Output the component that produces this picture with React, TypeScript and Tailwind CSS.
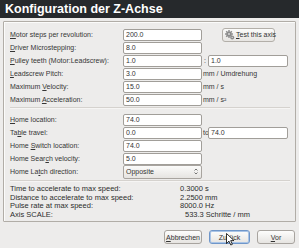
import React from "react";

const U = ({ children }: { children: React.ReactNode }) => (
  <span className="underline decoration-[0.6px] underline-offset-[1px]">{children}</span>
);

function Field({ value, wide }: { value: string; wide?: boolean }) {
  return (
    <div
      className={
        wide
          ? "flex h-[12px] w-[80px] shrink-0 items-center rounded-[2px] border border-[#a19e99] bg-white pl-[2px] text-[7px] text-[#333]"
          : "flex h-[12px] w-[79px] shrink-0 items-center rounded-[2px] border border-[#a19e99] bg-white pl-[2px] text-[7px] text-[#333]"
      }
    >
      {value}
    </div>
  );
}

function Row({ label, children }: { label: React.ReactNode; children?: React.ReactNode }) {
  return (
    <div className="flex h-[13px] items-center">
      <div className="w-[113px] shrink-0 whitespace-nowrap">{label}</div>
      {children}
    </div>
  );
}

function Gear() {
  return (
    <svg width="10" height="10" viewBox="0 0 10 10" className="shrink-0">
      <g fill="#8c8c8c">
        <circle cx="4" cy="4" r="2.6" />
        <rect x="3.3" y="0" width="1.4" height="8" />
        <rect x="0" y="3.3" width="8" height="1.4" />
        <rect x="3.3" y="0" width="1.4" height="8" transform="rotate(45 4 4)" />
        <rect x="3.3" y="0" width="1.4" height="8" transform="rotate(-45 4 4)" />
        <circle cx="7.2" cy="7.4" r="2" />
      </g>
      <circle cx="4" cy="4" r="1" fill="#d8d8d8" />
      <circle cx="7.2" cy="7.4" r="0.7" fill="#d8d8d8" />
    </svg>
  );
}

function Sep() {
  return <div className="mr-[5px] h-[2px] border-t border-[#d3d0cb] bg-[#f7f6f5] opacity-90" />;
}

function Btn({ children, focus, w }: { children: React.ReactNode; focus?: boolean; w: string }) {
  return (
    <div
      className={
        (focus
          ? "border-[#6f96c9] shadow-[inset_0_0_0_1px_#a9c4e6] "
          : "border-[#a8a49f] ") +
        w +
        " flex h-[14px] items-center justify-center rounded-[3px] border bg-gradient-to-b from-[#fdfdfc] to-[#e6e4e1] text-[7px] text-[#333]"
      }
    >
      {children}
    </div>
  );
}

export default function App() {
  return (
    <div className="relative flex h-[248px] w-[299px] flex-col overflow-hidden bg-[#edeceb] font-['Liberation_Sans',Arial,sans-serif] text-[7px] leading-none text-[#363636]">
      <div className="flex h-[18px] shrink-0 items-center bg-[#26292c] pl-[5px] text-[12.5px] font-bold text-white">
        Konfiguration der Z-Achse
      </div>

      <div className="ml-[3px] mr-[3px] mt-[3px] h-[201px] shrink-0 rounded-[1px] border border-[#b1ada7] pl-[6px] pt-[6px] shadow-[inset_1px_1px_0_#fbfbfa]">
        <Row label={<><U>M</U>otor steps per revolution:</>}>
          <Field value="200.0" />
          <div className="ml-[20px] flex h-[14px] w-[53px] shrink-0 items-center gap-[1px] rounded-[3px] border border-[#b3afa9] bg-gradient-to-b from-[#fbfbfa] to-[#e7e5e2] pl-[2px] text-[7px] text-[#333]">
            <Gear />
            <span className="whitespace-nowrap">
              <U>T</U>est this axis
            </span>
          </div>
        </Row>
        <Row label={<><U>D</U>river Microstepping:</>}>
          <Field value="8.0" />
        </Row>
        <Row label={<><U>P</U>ulley teeth (Motor:Leadscrew):</>}>
          <Field value="1.0" />
          <div className="w-[6px] shrink-0 pl-[2px]">:</div>
          <Field value="1.0" wide />
        </Row>
        <Row label={<><U>L</U>eadscrew Pitch:</>}>
          <Field value="3.0" />
          <div className="pl-[1px] whitespace-nowrap">mm / Umdrehung</div>
        </Row>
        <Row label={<>Maximum <U>V</U>elocity:</>}>
          <Field value="15.0" />
          <div className="pl-[1px] whitespace-nowrap">mm / s</div>
        </Row>
        <Row label={<>Maximum <U>A</U>cceleration:</>}>
          <Field value="50.0" />
          <div className="pl-[1px] whitespace-nowrap">mm / s²</div>
        </Row>

        <div className="mb-[4px] mt-[1px]">
          <Sep />
        </div>

        <Row label={<><U>H</U>ome location:</>}>
          <Field value="74.0" />
        </Row>
        <Row label={<>Ta<U>b</U>le travel:</>}>
          <Field value="0.0" />
          <div className="w-[6px] shrink-0 overflow-hidden whitespace-nowrap pl-[1px]">to</div>
          <Field value="74.0" wide />
        </Row>
        <Row label={<>Home <U>S</U>witch location:</>}>
          <Field value="74.0" />
        </Row>
        <Row label={<>Home Sear<U>c</U>h velocity:</>}>
          <Field value="5.0" />
        </Row>
        <Row label={<>Home La<U>t</U>ch direction:</>}>
          <div className="flex h-[14px] w-[79px] shrink-0 items-center justify-between rounded-[2px] border border-[#a8a49f] bg-gradient-to-b from-[#fbfbfa] to-[#e6e4e1] pl-[2px] pr-[3px] text-[7px] text-[#333]">
            <span>Opposite</span>
            <svg width="4" height="7" viewBox="0 0 4 7">
              <path d="M0.5 2.5 L2 1 L3.5 2.5 M0.5 4.5 L2 6 L3.5 4.5" stroke="#555" strokeWidth="0.8" fill="none" />
            </svg>
          </div>
        </Row>

        <div className="mb-[3px] mt-[2px]">
          <Sep />
        </div>

        <div className="flex text-[7.5px] leading-[8.5px] text-[#2c2c2c]">
          <div className="w-[170px] shrink-0 whitespace-nowrap">
            <div>Time to accelerate to max speed:</div>
            <div>Distance to accelerate to max speed:</div>
            <div>Pulse rate at max speed:</div>
            <div>Axis SCALE:</div>
          </div>
          <div className="whitespace-nowrap">
            <div>0.3000 s</div>
            <div>2.2500 mm</div>
            <div>8000.0 Hz</div>
            <div className="pl-[5px]">533.3 Schritte / mm</div>
          </div>
        </div>
      </div>

      <div className="mr-[4px] mt-[8px] flex justify-end gap-[7px]">
        <Btn w="w-[38px]">
          <span>
            <U>A</U>bbrechen
          </span>
        </Btn>
        <Btn w="w-[41px]" focus>
          <span>
            Zu<U>r</U>ück
          </span>
        </Btn>
        <Btn w="w-[38px]">
          <span>
            <U>V</U>or
          </span>
        </Btn>
      </div>

      <svg className="absolute left-[226px] top-[233px]" width="9" height="13" viewBox="0 0 9 13">
        <path d="M0.5 0.5 L0.5 10.5 L3 8.2 L4.8 12 L6.4 11.3 L4.7 7.6 L8 7.6 Z" fill="#fff" stroke="#000" strokeWidth="0.8" strokeLinejoin="round" />
      </svg>
    </div>
  );
}
